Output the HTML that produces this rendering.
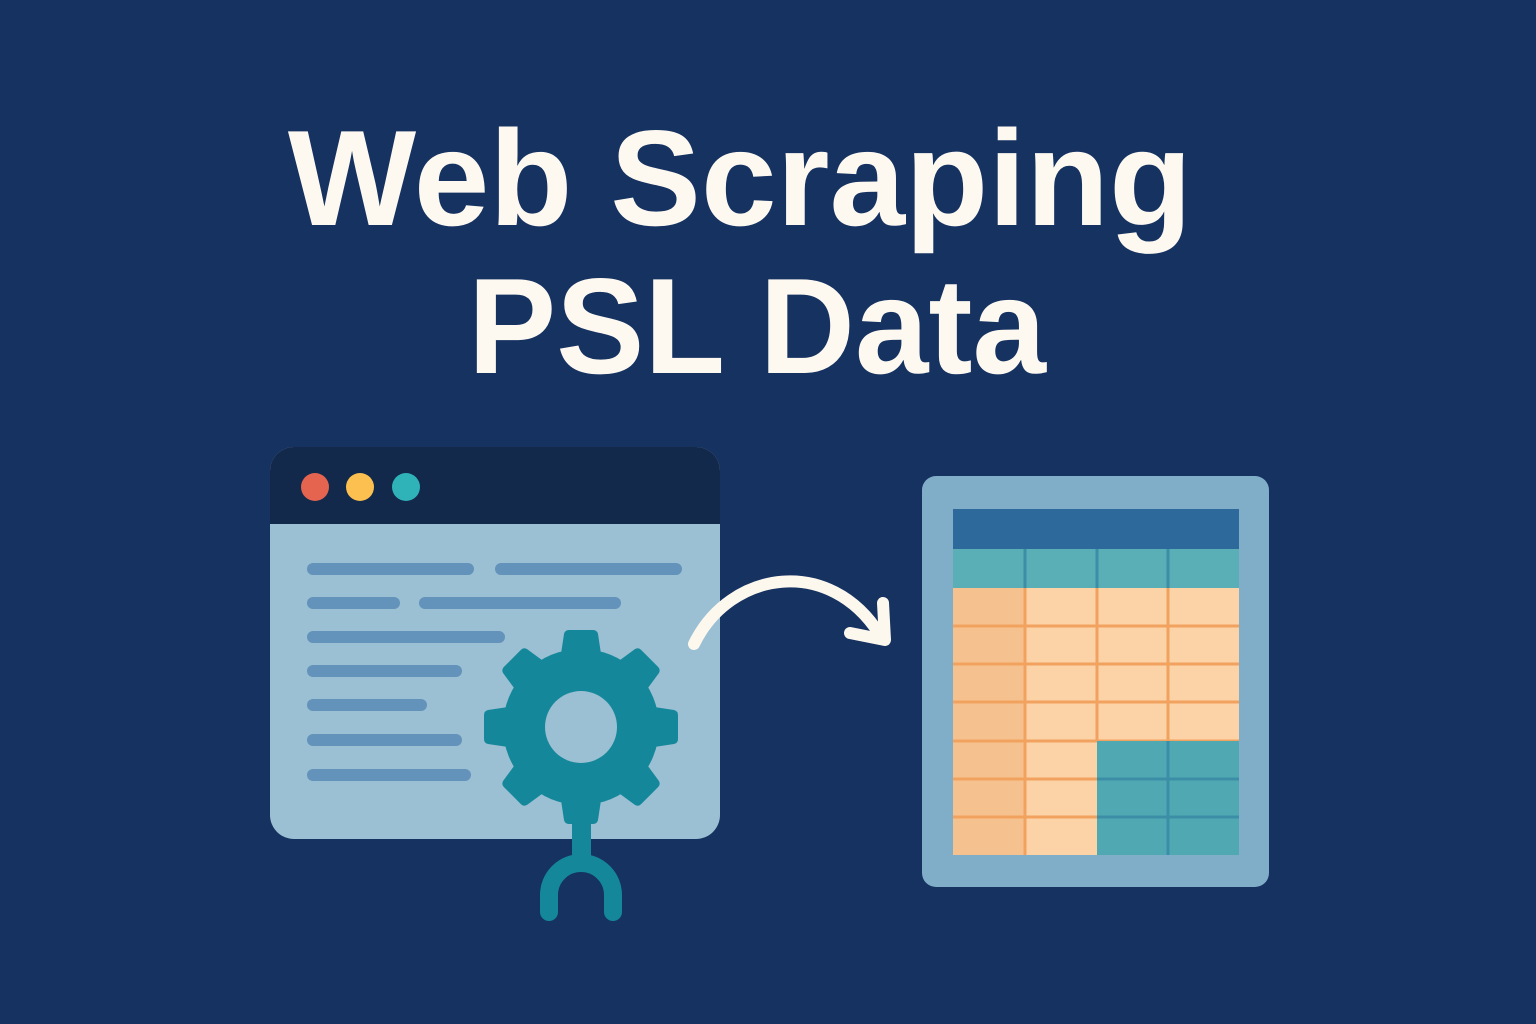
<!DOCTYPE html>
<html><head><meta charset="utf-8"><style>
html,body{margin:0;padding:0;background:#163261;}
svg{display:block}
</style></head><body>
<svg width="1536" height="1024" viewBox="0 0 1536 1024" xmlns="http://www.w3.org/2000/svg">
<rect width="1536" height="1024" fill="#163261"/>
<g font-family="Liberation Sans, sans-serif" font-weight="bold" fill="#fdf9f1" text-anchor="middle">
<text x="740" y="225" font-size="136">Web Scraping</text>
<text x="757" y="373" font-size="136" textLength="578" lengthAdjust="spacingAndGlyphs">PSL Data</text>
</g>
<!-- browser -->
<rect x="270" y="447" width="450" height="392" rx="24" fill="#9bbfd3"/>
<path d="M294 447 H696 A24 24 0 0 1 720 471 V524 H270 V471 A24 24 0 0 1 294 447Z" fill="#13294b"/>
<circle cx="315" cy="487" r="14" fill="#e4644f"/>
<circle cx="360" cy="487" r="14" fill="#fbc04f"/>
<circle cx="406" cy="487" r="14" fill="#2fb3b9"/>
<g stroke="#6393bb" stroke-width="12" stroke-linecap="round">
<line x1="313" y1="569" x2="468" y2="569"/><line x1="501" y1="569" x2="676" y2="569"/>
<line x1="313" y1="603" x2="394" y2="603"/><line x1="425" y1="603" x2="615" y2="603"/>
<line x1="313" y1="637" x2="499" y2="637"/>
<line x1="313" y1="671" x2="456" y2="671"/>
<line x1="313" y1="705" x2="421" y2="705"/>
<line x1="313" y1="740" x2="456" y2="740"/>
<line x1="313" y1="775" x2="465" y2="775"/>
</g>
<!-- gear -->
<g fill="#14889a">
<g transform="translate(581,727)">
<circle r="78"/>
<path id="t" d="M-22 -60 L-17 -93 Q-16 -97 -12 -97 H12 Q16 -97 17 -93 L22 -60Z"/>
<use href="#t" transform="rotate(45)"/>
<use href="#t" transform="rotate(90)"/>
<use href="#t" transform="rotate(135)"/>
<use href="#t" transform="rotate(180)"/>
<use href="#t" transform="rotate(225)"/>
<use href="#t" transform="rotate(270)"/>
<use href="#t" transform="rotate(315)"/>
</g>
<rect x="572" y="810" width="19" height="60"/>
</g>
<circle cx="581" cy="727" r="36" fill="#9bbfd3"/>
<path d="M549 912 V895 A32 32 0 0 1 613 895 V912" fill="none" stroke="#14889a" stroke-width="18" stroke-linecap="round"/>
<!-- arrow -->
<g fill="none" stroke="#fdf8ee" stroke-width="12" stroke-linecap="round" stroke-linejoin="round">
<path d="M694 644 C730 570 830 555 880 635"/>
<path d="M883 603 L885 640 L850 633"/>
</g>
<!-- table -->
<rect x="922" y="476" width="347" height="411" rx="14" fill="#80adc8"/>
<rect x="953" y="509" width="286" height="40" fill="#2d6a9b"/>
<rect x="953" y="549" width="286" height="39" fill="#5aafb7"/>
<rect x="953" y="588" width="286" height="267" fill="#fbd3a6"/>
<rect x="953" y="588" width="71" height="267" fill="#f5c18e"/>
<g stroke="#f2a25f" stroke-width="3">
<line x1="953" y1="626" x2="1239" y2="626"/><line x1="953" y1="664" x2="1239" y2="664"/>
<line x1="953" y1="702" x2="1239" y2="702"/><line x1="953" y1="741" x2="1239" y2="741"/>
<line x1="953" y1="779" x2="1097" y2="779"/><line x1="953" y1="817" x2="1097" y2="817"/>
<line x1="1025" y1="588" x2="1025" y2="855"/><line x1="1097" y1="588" x2="1097" y2="741"/>
<line x1="1168" y1="588" x2="1168" y2="741"/>
</g>
<rect x="1097" y="741" width="142" height="114" fill="#50a8b3"/>
<g stroke="#3b8ea5" stroke-width="3">
<line x1="1097" y1="779" x2="1239" y2="779"/><line x1="1097" y1="817" x2="1239" y2="817"/>
<line x1="1168" y1="741" x2="1168" y2="855"/>
<line x1="1025" y1="549" x2="1025" y2="588"/><line x1="1097" y1="549" x2="1097" y2="588"/><line x1="1168" y1="549" x2="1168" y2="588"/>
</g>
</svg>
</body></html>
